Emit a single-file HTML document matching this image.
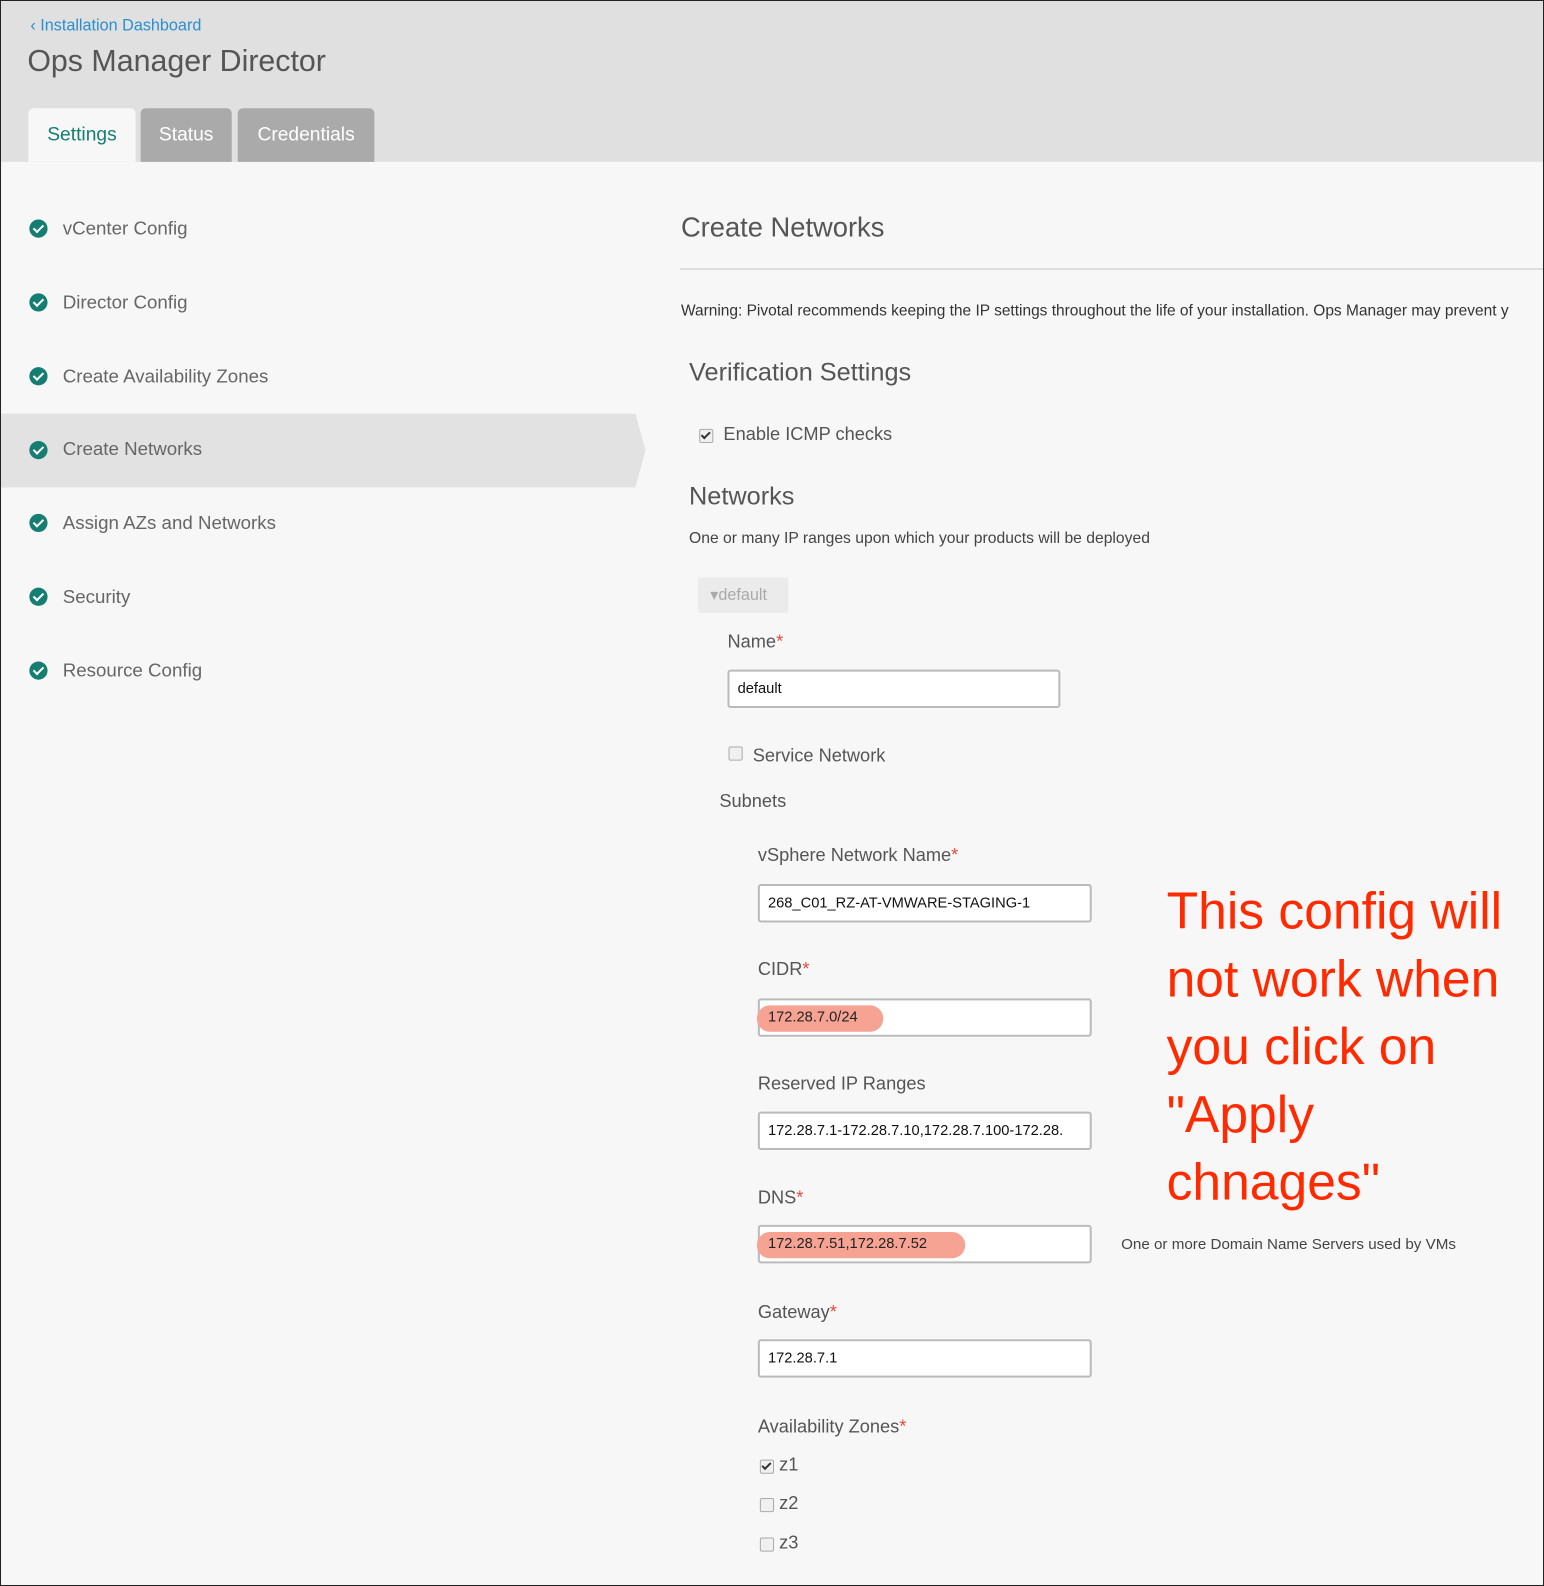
<!DOCTYPE html>
<html><head><meta charset="utf-8"><style>
html,body{margin:0;padding:0;width:1544px;height:1586px;overflow:hidden;background:#f7f7f7}
#w{position:absolute;left:0;top:0;width:1526px;height:1568px;transform:scale(1.01180,1.01148);transform-origin:0 0;font-family:"Liberation Sans",sans-serif;background:#f7f7f7;border:1px solid #222;box-sizing:border-box;overflow:hidden}
.a{position:absolute;white-space:nowrap}
.hdr{position:absolute;left:0;top:0;width:1526px;height:159px;background:#e0e0e0}
.tab{position:absolute;top:106px;height:53px;border-radius:5px 5px 0 0;font-size:19px;line-height:53px;text-align:center}
.nav{font-size:18.5px;color:#666;left:61px}
.chk{position:absolute;left:28px;width:18px;height:18px;border-radius:50%;background:#157e73}
.chk:after{content:"";position:absolute;left:6px;top:3px;width:4px;height:8px;border:solid #fff;border-width:0 2.5px 2.5px 0;transform:rotate(45deg)}
.lbl{font-size:18px;color:#555}
.req{color:#e74c3c}
.inp{position:absolute;height:38px;border:2px solid #bbb;border-radius:3px;background:#fff;box-sizing:border-box;font-size:14.5px;line-height:34px;padding-left:8px;color:#111;overflow:hidden;white-space:nowrap}
.hl{position:absolute;background:#f6a393;border-radius:14px;height:26px}
.cb{position:absolute;width:12px;height:12px;border:1px solid #aaa;border-radius:2px;background:#f0f0f0}
.cb.on:after{content:"";position:absolute;left:3px;top:0;width:3px;height:7px;border:solid #333;border-width:0 2px 2px 0;transform:rotate(45deg)}
</style></head><body><div id="w">
<div class="hdr"></div>
<div class="a" style="left:29px;top:16px;font-size:16px;color:#2a8fd1">&#x2039; Installation Dashboard</div>
<div class="a" style="left:26px;top:43px;font-size:30px;color:#555">Ops Manager Director</div>
<div class="tab" style="left:27px;width:106px;background:#f7f7f7;color:#157e73">Settings</div>
<div class="tab" style="left:138px;width:90px;background:#aaa;color:#fff">Status</div>
<div class="tab" style="left:234px;width:135px;background:#aaa;color:#fff">Credentials</div>

<div class="a" style="left:0;top:408px;width:625px;height:73px;background:#e2e2e2"></div>
<svg class="a" style="left:624px;top:408px" width="14" height="73"><polygon points="0,0 3,0 13,36 3,73 0,73" fill="#e2e2e2"/></svg>
<div class="chk" style="top:216px"></div><div class="a nav" style="top:214px">vCenter Config</div>
<div class="chk" style="top:289px"></div><div class="a nav" style="top:287px">Director Config</div>
<div class="chk" style="top:362px"></div><div class="a nav" style="top:360px">Create Availability Zones</div>
<div class="chk" style="top:435px"></div><div class="a nav" style="top:432px">Create Networks</div>
<div class="chk" style="top:507px"></div><div class="a nav" style="top:505px">Assign AZs and Networks</div>
<div class="chk" style="top:580px"></div><div class="a nav" style="top:578px">Security</div>
<div class="chk" style="top:653px"></div><div class="a nav" style="top:651px">Resource Config</div>

<div class="a" style="left:672px;top:209px;font-size:27px;color:#555">Create Networks</div>
<div class="a" style="left:671px;top:264px;width:860px;height:2px;background:#ddd"></div>
<div class="a" style="left:672px;top:298px;font-size:15.3px;color:#333">Warning: Pivotal recommends keeping the IP settings throughout the life of your installation. Ops Manager may prevent y</div>
<div class="a" style="left:680px;top:353px;font-size:25px;color:#555">Verification Settings</div>
<div class="cb on" style="left:690px;top:423px"></div>
<div class="a lbl" style="left:714px;top:418px">Enable ICMP checks</div>
<div class="a" style="left:680px;top:476px;font-size:25px;color:#555">Networks</div>
<div class="a" style="left:680px;top:523px;font-size:15.5px;color:#444">One or many IP ranges upon which your products will be deployed</div>
<div class="a" style="left:689px;top:570px;width:89px;height:35px;background:#ebebeb;border-radius:2px"></div>
<div class="a" style="left:701px;top:577px;font-size:16px;color:#aaa">&#9662;default</div>
<div class="a lbl" style="left:718px;top:623px">Name<span class="req">*</span></div>
<div class="inp" style="left:718px;top:661px;width:329px">default</div>
<div class="cb" style="left:719px;top:737px"></div>
<div class="a lbl" style="left:743px;top:736px">Service Network</div>
<div class="a lbl" style="left:710px;top:781px">Subnets</div>

<div class="a lbl" style="left:748px;top:834px">vSphere Network Name<span class="req">*</span></div>
<div class="inp" style="left:748px;top:873px;width:330px">268_C01_RZ-AT-VMWARE-STAGING-1</div>
<div class="a lbl" style="left:748px;top:947px">CIDR<span class="req">*</span></div>
<div class="inp" style="left:748px;top:986px;width:330px"></div>
<div class="hl" style="left:747px;top:993px;width:125px"></div>
<div class="a" style="left:758px;top:997px;font-size:14.5px;color:#222">172.28.7.0/24</div>
<div class="a lbl" style="left:748px;top:1060px">Reserved IP Ranges</div>
<div class="inp" style="left:748px;top:1098px;width:330px">172.28.7.1-172.28.7.10,172.28.7.100-172.28.</div>
<div class="a lbl" style="left:748px;top:1173px">DNS<span class="req">*</span></div>
<div class="inp" style="left:748px;top:1210px;width:330px"></div>
<div class="hl" style="left:747px;top:1217px;width:206px"></div>
<div class="a" style="left:758px;top:1221px;font-size:14.5px;color:#222">172.28.7.51,172.28.7.52</div>
<div class="a" style="left:1107px;top:1221px;font-size:15px;color:#444">One or more Domain Name Servers used by VMs</div>
<div class="a lbl" style="left:748px;top:1286px">Gateway<span class="req">*</span></div>
<div class="inp" style="left:748px;top:1323px;width:330px">172.28.7.1</div>
<div class="a lbl" style="left:748px;top:1399px">Availability Zones<span class="req">*</span></div>
<div class="cb on" style="left:750px;top:1442px"></div><div class="a lbl" style="left:769px;top:1437px">z1</div>
<div class="cb" style="left:750px;top:1480px"></div><div class="a lbl" style="left:769px;top:1475px">z2</div>
<div class="cb" style="left:750px;top:1519px"></div><div class="a lbl" style="left:769px;top:1514px">z3</div>

<div class="a" style="left:1152px;top:866px;font-size:51px;line-height:67px;color:#ff2a00;white-space:normal;width:370px">This config will not work when you click on "Apply chnages"</div>
</div></body></html>
